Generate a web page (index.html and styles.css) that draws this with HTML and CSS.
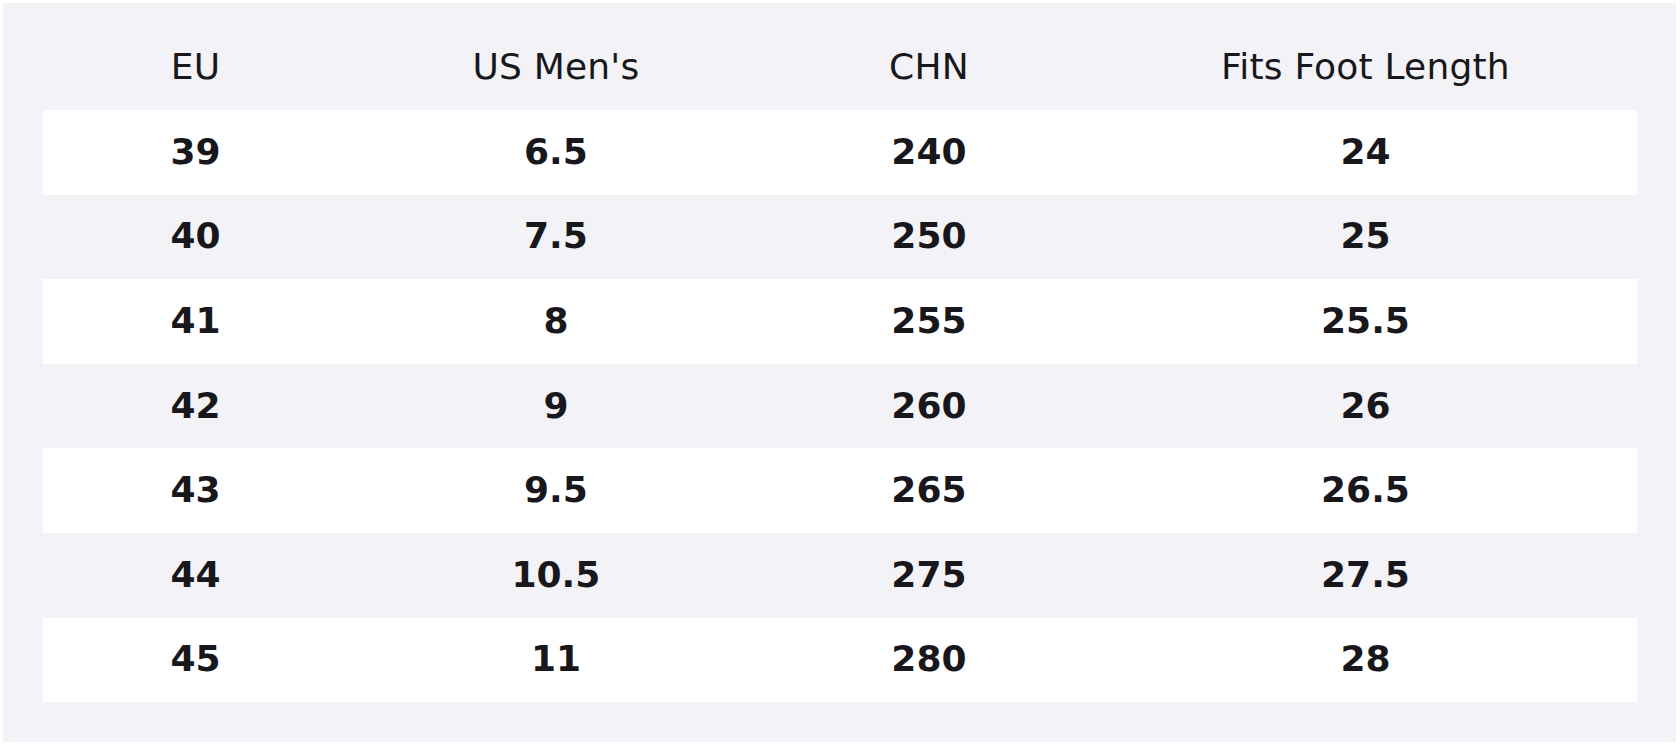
FILE: index.html
```html
<!DOCTYPE html>
<html lang="en">
<head>
<meta charset="utf-8">
<title>Size Chart</title>
<link rel="stylesheet" href="styles.css">
</head>
<body>
<div class="panel">
  <table class="size-table">
    <colgroup>
      <col class="c-eu">
      <col class="c-us">
      <col class="c-chn">
      <col class="c-len">
    </colgroup>
    <thead>
      <tr><th>EU</th><th>US Men's</th><th>CHN</th><th>Fits Foot Length</th></tr>
    </thead>
    <tbody>
      <tr><td>39</td><td>6.5</td><td>240</td><td>24</td></tr>
      <tr><td>40</td><td>7.5</td><td>250</td><td>25</td></tr>
      <tr><td>41</td><td>8</td><td>255</td><td>25.5</td></tr>
      <tr><td>42</td><td>9</td><td>260</td><td>26</td></tr>
      <tr><td>43</td><td>9.5</td><td>265</td><td>26.5</td></tr>
      <tr><td>44</td><td>10.5</td><td>275</td><td>27.5</td></tr>
      <tr><td>45</td><td>11</td><td>280</td><td>28</td></tr>
    </tbody>
  </table>
</div>
</body>
</html>
```

FILE: styles.css
```css
html, body {
  margin: 0;
  padding: 0;
  background: #ffffff;
}

body {
  padding: 3px 4px 5px 3px;
  font-family: "DejaVu Sans", Verdana, sans-serif;
  color: #17171c;
}

.panel {
  background: #f3f3f7;
  padding: 40px 39px 40px 40px;
}

.size-table {
  width: 100%;
  border-collapse: collapse;
  table-layout: fixed;
}

.c-eu { width: 19.13%; }
.c-us { width: 26.10%; }
.c-chn { width: 20.70%; }
.c-len { width: 34.07%; }

.size-table th {
  font-size: 36px;
  font-weight: normal;
  line-height: 43px;
  letter-spacing: 0.2px;
  padding: 2px 0 22px;
  text-align: center;
}

.size-table td {
  font-size: 36px;
  font-weight: bold;
  line-height: 43px;
  padding: 19.8px 0 21.8px;
  text-align: center;
}

.size-table tbody tr:nth-child(odd) {
  background: #ffffff;
}
```
